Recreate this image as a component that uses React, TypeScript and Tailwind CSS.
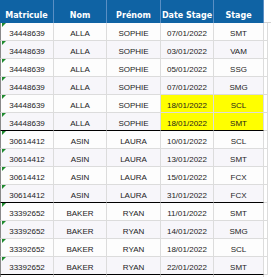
const rows = [
  ["34448639", "ALLA", "SOPHIE", "07/01/2022", "SMT"],
  ["34448639", "ALLA", "SOPHIE", "03/01/2022", "VAM"],
  ["34448639", "ALLA", "SOPHIE", "05/01/2022", "SSG"],
  ["34448639", "ALLA", "SOPHIE", "07/01/2022", "SMG"],
  ["34448639", "ALLA", "SOPHIE", "18/01/2022", "SCL"],
  ["34448639", "ALLA", "SOPHIE", "18/01/2022", "SMT"],
  ["30614412", "ASIN", "LAURA", "10/01/2022", "SCL"],
  ["30614412", "ASIN", "LAURA", "13/01/2022", "SMT"],
  ["30614412", "ASIN", "LAURA", "15/01/2022", "FCX"],
  ["30614412", "ASIN", "LAURA", "31/01/2022", "FCX"],
  ["33392652", "BAKER", "RYAN", "11/01/2022", "SMT"],
  ["33392652", "BAKER", "RYAN", "14/01/2022", "SMG"],
  ["33392652", "BAKER", "RYAN", "18/01/2022", "SCL"],
  ["33392652", "BAKER", "RYAN", "22/01/2022", "SMT"],
];

const headers = ["Matricule", "Nom", "Prénom", "Date Stage", "Stage"];
const grid = "grid grid-cols-[54px_53px_54px_53px_50px_1fr]";

export default function App() {
  return (
    <div className="w-[271px] h-[277px] overflow-hidden bg-white font-['Liberation_Sans',Arial,sans-serif] text-[8px] leading-[10px] text-[#1c1c1c]">
      <div className={`${grid} h-[23px]`}>
        {headers.map((h) => (
          <div
            key={h}
            className="flex items-end justify-center pb-[2px] bg-[#0f63a4] border-r border-[#5a8fc4] font-['DejaVu_Sans',Verdana,sans-serif] font-bold text-white"
          >
            {h}
          </div>
        ))}
        <div className="border-b border-[#d4d4d4]" />
      </div>
      {rows.map((r, i) => {
        const groupEnd = i === 5 || i === 9 || i === 13;
        const yellow = i === 4 || i === 5;
        const tint = i % 2 === 1 ? "bg-[#f7f6fa]" : "bg-[#fdfdfd]";
        const line = groupEnd ? "border-b border-b-black" : "border-b border-b-[#dcdcdc]";
        return (
          <div key={i} className={`${grid} h-[18px]`}>
            {r.map((c, j) => (
              <div
                key={j}
                className={`relative flex items-end justify-center pb-[1px] border-r border-r-[#dcdcdc] ${line} ${
                  yellow && j >= 3 ? "bg-[#ffff00]" : tint
                } ${j === 0 ? "border-l border-l-[#8a8a8a]" : ""}`}
              >
                {j === 0 && (
                  <span className="absolute left-[1px] top-0 w-0 h-0 border-t-[4px] border-t-[#1e8a2e] border-r-[4px] border-r-transparent" />
                )}
                {c}
              </div>
            ))}
            <div className="border-b border-b-[#dcdcdc] border-r border-r-[#dcdcdc] mr-[3px]" />
          </div>
        );
      })}
      <div className={`${grid} h-[4px]`}>
        {headers.map((h, j) => (
          <div
            key={h}
            className={`border-r border-r-[#dcdcdc] ${j === 0 ? "border-l border-l-[#8a8a8a]" : ""}`}
          />
        ))}
      </div>
    </div>
  );
}
